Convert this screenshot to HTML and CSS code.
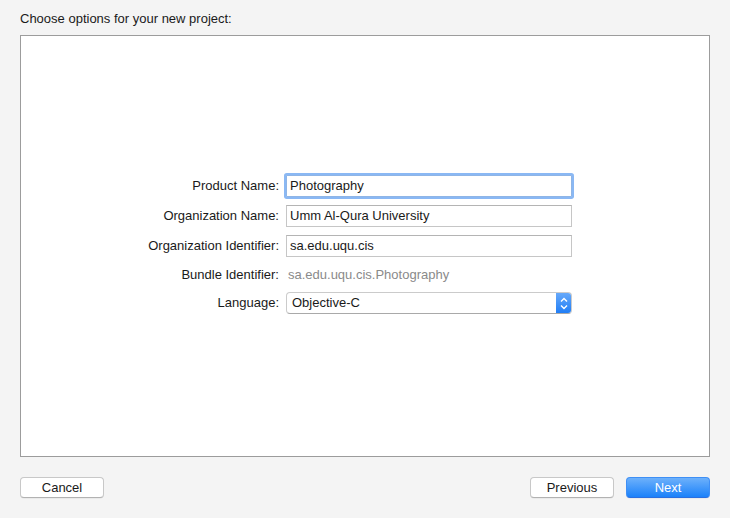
FILE: index.html
```html
<!DOCTYPE html>
<html>
<head>
<meta charset="utf-8">
<link rel="stylesheet" href="styles.css">
</head>
<body>
<div class="title">Choose options for your new project:</div>
<div class="panel">
  <div class="form">
    <div class="label">Product Name:</div>
    <div class="field focused">Photography</div>
    <div class="label">Organization Name:</div>
    <div class="field">Umm Al-Qura University</div>
    <div class="label">Organization Identifier:</div>
    <div class="field">sa.edu.uqu.cis</div>
    <div class="label bundle-label">Bundle Identifier:</div>
    <div class="bundle">sa.edu.uqu.cis.Photography</div>
    <div class="label">Language:</div>
    <div class="popup">
      <span class="popup-text">Objective-C</span>
      <span class="stepper">
        <svg width="16" height="21" viewBox="0 0 16 21">
          <path d="M5 8.5 L8 5.5 L11 8.5" fill="none" stroke="#fff" stroke-width="1.4"/>
          <path d="M5 12.5 L8 15.5 L11 12.5" fill="none" stroke="#fff" stroke-width="1.4"/>
        </svg>
      </span>
    </div>
  </div>
</div>
<div class="footer">
  <button class="btn">Cancel</button>
  <div class="right">
    <button class="btn">Previous</button>
    <button class="btn primary">Next</button>
  </div>
</div>
</body>
</html>
```

FILE: styles.css
```css
html, body {
  margin: 0;
  padding: 0;
  background: #f4f4f4;
  font-family: "Liberation Sans", Arial, sans-serif;
  font-size: 13px;
  color: #1a1a1a;
}
body {
  width: 730px;
  height: 518px;
  padding: 0 20px;
  box-sizing: border-box;
  overflow: hidden;
}
.title {
  padding-top: 11px;
  height: 35px;
  line-height: 16px;
  box-sizing: border-box;
}
.panel {
  width: 690px;
  height: 422px;
  box-sizing: border-box;
  border: 1px solid #9c9c9c;
  background: #fff;
  padding-top: 139px;
}
.form {
  display: grid;
  grid-template-columns: 258px 286px;
  column-gap: 7px;
  row-gap: 8px;
  align-items: center;
}
.label {
  text-align: right;
  line-height: 22px;
  color: #1a1a1a;
}
.bundle-label, .bundle {
  line-height: 19px;
}
.bundle {
  color: #8a8a8a;
  padding-left: 2px;
}
.field {
  height: 22px;
  box-sizing: border-box;
  border: 1px solid #c6c6c6;
  border-top-color: #b4b4b4;
  background: #fff;
  padding-left: 3px;
  line-height: 20px;
}
.field.focused {
  border-color: #8fb5e6;
  box-shadow: 0 0 0 2px #8ab8f4;
  border-radius: 1px;
}
.popup {
  height: 22px;
  box-sizing: border-box;
  border: 1px solid #cbcbcb;
  border-bottom-color: #a9a9a9;
  border-radius: 4px;
  background: #fff;
  display: flex;
  align-items: center;
  justify-content: space-between;
  overflow: hidden;
}
.popup-text {
  padding-left: 5px;
  line-height: 20px;
}
.stepper {
  width: 16px;
  height: 22px;
  margin-right: -1px;
  background: linear-gradient(#6aabfa, #1d7cf6);
  display: flex;
  align-items: center;
  justify-content: center;
}
.stepper svg {
  display: block;
}
.footer {
  display: flex;
  justify-content: space-between;
  padding-top: 20px;
}
.right {
  display: flex;
  gap: 12px;
}
.btn {
  width: 84px;
  height: 21px;
  box-sizing: border-box;
  border: 1px solid #c8c8c8;
  border-bottom-color: #b2b2b2;
  border-radius: 4px;
  background: #fff;
  font-family: "Liberation Sans", Arial, sans-serif;
  font-size: 13px;
  color: #1a1a1a;
  padding: 0;
  line-height: 19px;
  box-shadow: 0 0.5px 0.5px rgba(0,0,0,0.08);
}
.btn.primary {
  border: 1px solid #3f8ff5;
  border-bottom-color: #2a6fe0;
  background: linear-gradient(#6db1fb, #1b81fa);
  color: #fff;
}
```
